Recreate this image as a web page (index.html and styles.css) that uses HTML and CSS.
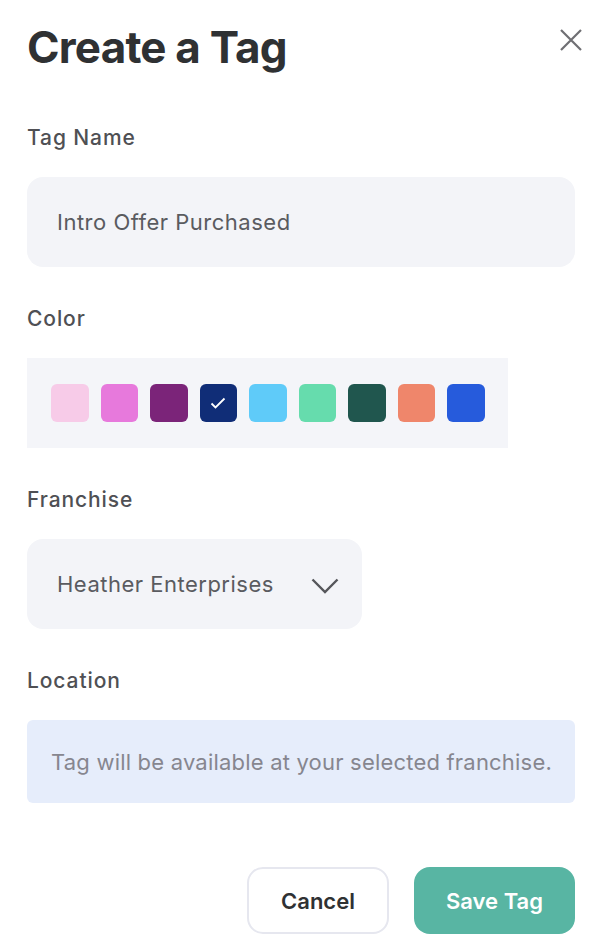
FILE: index.html
```html
<!DOCTYPE html>
<html lang="en">
<head>
  <meta charset="UTF-8">
  <meta name="viewport" content="width=device-width, initial-scale=1.0">
  <title>Create a Tag</title>
  <link rel="stylesheet" href="styles.css">
</head>
<body>

<div class="modal">
  <div class="modal-header">
    <h1>Create a Tag</h1>
    <button class="close-btn" aria-label="Close">
      <svg width="22" height="22" viewBox="0 0 22 22"><path d="M1 1L21 21M21 1L1 21" stroke="#6f6f73" stroke-width="2.2" fill="none"/></svg>
    </button>
  </div>

  <label class="field-label">Tag Name</label>
  <div class="input-box">Intro Offer Purchased</div>

  <label class="field-label">Color</label>
  <div class="swatches">
    <span class="swatch" style="background:#f7cbe8"></span>
    <span class="swatch" style="background:#e779dc"></span>
    <span class="swatch" style="background:#7b2479"></span>
    <span class="swatch selected" style="background:#102d77">
      <svg width="16" height="12" viewBox="0 0 16 12"><path d="M1.5 6.5L5.5 10.5L14.5 1.5" stroke="#fff" stroke-width="1.8" fill="none"/></svg>
    </span>
    <span class="swatch" style="background:#5fcbf9"></span>
    <span class="swatch" style="background:#66dcad"></span>
    <span class="swatch" style="background:#20564e"></span>
    <span class="swatch" style="background:#ef866b"></span>
    <span class="swatch" style="background:#265bdc"></span>
  </div>

  <label class="field-label">Franchise</label>
  <div class="select-box">
    <span>Heather Enterprises</span>
    <svg width="28" height="16" viewBox="0 0 28 16"><path d="M1.5 1.5L14 14L26.5 1.5" stroke="#55565b" stroke-width="2.4" fill="none"/></svg>
  </div>

  <label class="field-label">Location</label>
  <div class="info-box">Tag will be available at your selected franchise.</div>

  <div class="actions">
    <button class="btn btn-cancel">Cancel</button>
    <button class="btn btn-save">Save Tag</button>
  </div>
</div>

</body>
</html>
```

FILE: styles.css
```css
/* Basic styling */
* { box-sizing: border-box; margin: 0; padding: 0; }
body { font-family: "Inter", "Noto Sans", sans-serif; background-color: #fff; color: #333; }
.modal { width: 548px; margin-left: 27px; padding-top: 19px; display: flex; flex-direction: column; }
.modal-header { display: flex; justify-content: space-between; align-items: flex-start; height: 56px; margin-bottom: 51px; }
h1 { font-size: 44px; line-height: 56px; font-weight: 700; color: #2f3133; letter-spacing: -0.8px; }
.close-btn { background: none; border: none; margin-top: 10px; margin-right: -7px; cursor: pointer; }
.field-label { display: block; font-size: 21px; line-height: 24px; font-weight: 500; letter-spacing: 0.9px; color: #4f5054; margin-bottom: 27px; }
.input-box { height: 90px; background-color: #f3f4f8; border-radius: 16px; padding-left: 30px; display: flex; align-items: center; font-size: 22px; letter-spacing: 0.5px; color: #5a5b60; margin-bottom: 40px; }
.swatches { width: 481px; height: 90px; background-color: #f4f5f9; display: flex; align-items: center; gap: 12px; padding-left: 24px; margin-bottom: 40px; }
.swatch { width: 37.5px; height: 38px; border-radius: 6px; display: flex; align-items: center; justify-content: center; }
.select-box { width: 335px; height: 90px; background-color: #f3f4f8; border-radius: 16px; padding: 0 23px 0 30px; display: flex; align-items: center; justify-content: space-between; font-size: 22px; letter-spacing: 0.5px; color: #5a5b60; margin-bottom: 40px; }
.select-box svg { margin-top: 4px; }
.info-box { height: 83px; background-color: #e6edfb; border-radius: 6px; padding-left: 24px; display: flex; align-items: center; font-size: 22px; letter-spacing: 0.2px; color: #86868f; margin-bottom: 64px; }
.actions { display: flex; justify-content: flex-end; gap: 25px; }
.btn { height: 67px; border-radius: 16px; font-family: inherit; font-size: 22px; font-weight: 600; cursor: pointer; }
.btn-cancel { width: 142px; background-color: #fff; border: 2px solid #e6e7ef; color: #2f3133; }
.btn-save { width: 161px; background-color: #58b5a3; border: none; color: #fff; }
```
